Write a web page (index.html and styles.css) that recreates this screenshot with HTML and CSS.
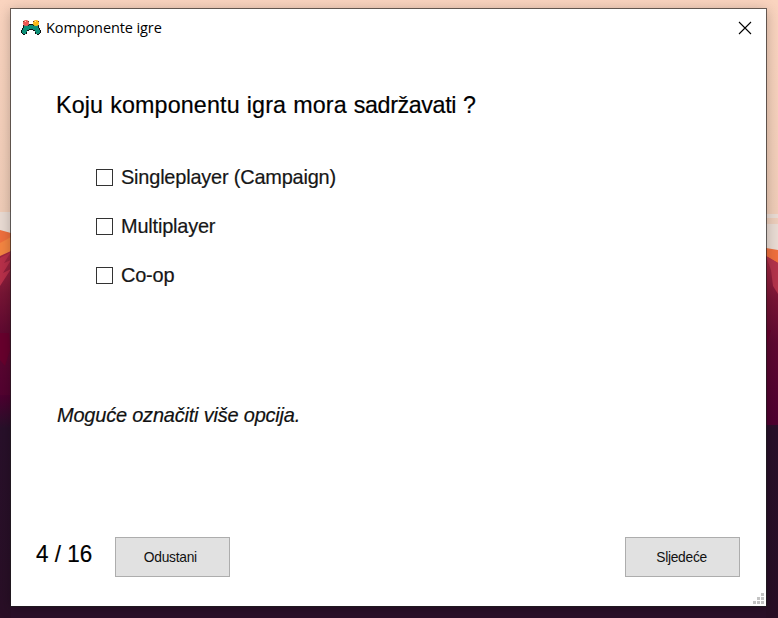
FILE: index.html
```html
<!DOCTYPE html>
<html lang="hr">
<head>
<meta charset="utf-8">
<title>Komponente igre</title>
<link rel="stylesheet" href="styles.css">
</head>
<body>
<svg class="wallpaper" viewBox="0 0 778 618" aria-hidden="true">
  <defs>
    <linearGradient id="sky" x1="0" y1="0" x2="0" y2="1">
      <stop offset="0" stop-color="#fad4bf"/><stop offset=".85" stop-color="#f0cdb8"/><stop offset="1" stop-color="#e5d1c6"/>
    </linearGradient>
    <linearGradient id="hill" x1="0" y1="0" x2="0" y2="1">
      <stop offset="0" stop-color="#a72943"/><stop offset=".25" stop-color="#781535"/><stop offset=".5" stop-color="#5e0830"/><stop offset="1" stop-color="#4e0030"/>
    </linearGradient>
    <linearGradient id="base" x1="0" y1="0" x2="0" y2="1">
      <stop offset="0" stop-color="#4e0030"/><stop offset=".15" stop-color="#28102a"/><stop offset="1" stop-color="#290f26"/>
    </linearGradient>
  </defs>
  <rect width="778" height="618" fill="#2b1029"/>
  <rect width="778" height="250" fill="url(#sky)"/>
  <path d="M0 212H11V234H0zM766 214H778V218H766zM766 224H778V250H766z" fill="#eadcd4"/>
  <path d="M0 230L11 233V290H0zM766 248L778 250V300H766z" fill="#f0703e"/>
  <path d="M0 243L11 237V254L0 258z" fill="#f58642"/>
  <path d="M0 256L11 251V420H0z" fill="url(#hill)"/>
  <path d="M0 258L11 252 4 263 11 260 3 273 11 269 0 286z" fill="#b9304a"/>
  <path d="M766 256L778 263V430H766z" fill="url(#hill)"/>
  <path d="M766 256L778 263V294L773 286 771 270z" fill="#b3344b"/>
  <path d="M0 333L9 333 10 350 5 366 0 360zM766 330H771L767 345z" fill="#68002d"/>
  <path d="M0 395H11V618H0zM766 425H778V618H766z" fill="url(#base)"/>
</svg>
<main class="window">
  <header class="titlebar">
    <svg class="app-icon" viewBox="0 0 20 16" aria-hidden="true">
      <path d="M3 4H17V6H18V9H19V13H18V14H15V12H14V10H12V9H8V10H6V12H5V14H2V13H1V9H2V6H3z" fill="#0d9078"/>
      <path d="M2 5H3V8H2zM1 8H2V10H1zM0 10H1V13H0zM1 13H2V14H1zM2 14H4V15H2zM5 12H6V14H5zM6 10H8V11H6zM8 9H12V10H8zM12 10H14V11H12zM14 12H15V14H14zM16 14H18V15H16zM18 13H19V14H18zM19 10H20V13H19zM18 8H19V10H18zM17 5H18V8H17zM8 4H12V5H8zM7 5H8V6H7zM12 5H13V6H12z" fill="#101010"/>
      <circle cx="5" cy="3" r="3" fill="#ee5652"/><circle cx="15" cy="3" r="3" fill="#fbb917"/>
      <path d="M4 1H5V2H4zM14 1H15V2H14z" fill="#ffd9a8"/>
      <path d="M7 1H8V2H7zM12 1H13V2H12zM2 1H3V2H2zM17 1H18V2H17z" fill="#6b3821"/>
    </svg>
    <span class="title">Komponente igre</span>
    <svg class="close" viewBox="0 0 12 12" aria-hidden="true"><path d="M0 0L12 12M12 0L0 12"/></svg>
  </header>
  <section class="content">
    <h1><span class="fit t-heading">Koju komponentu igra mora <span class="tight">sadržavati</span> ?</span></h1>
    <div class="options">
      <label class="option"><i class="box"></i><span class="fit t-option">Singleplayer (Campaign)</span></label>
      <label class="option"><i class="box"></i><span class="fit t-option">Multiplayer</span></label>
      <label class="option"><i class="box"></i><span class="fit t-option">Co-op</span></label>
    </div>
    <p class="note"><span class="fit t-note">Moguće označiti više opcija.</span></p>
  </section>
  <footer class="footer">
    <span class="progress"><span class="fit t-progress">4 / 16</span></span>
    <button class="btn cancel"><span class="t-btn">Odustani</span></button>
    <button class="btn next"><span class="t-btn">Sljedeće</span></button>
  </footer>
  <svg class="grip" viewBox="0 0 11 11" aria-hidden="true"><path d="M8 0h3v3H8zM4 4h3v3H4zM8 4h3v3H8zM0 8h3v3H0zM4 8h3v3H4zM8 8h3v3H8z"/></svg>
</main>
</body>
</html>
```
FILE: styles.css
```css
* { box-sizing: border-box; }
body {
  margin: 0;
  width: 778px;
  height: 618px;
  overflow: hidden;
  position: relative;
  padding: 8px 0 0 10px;
  font-family: "Liberation Sans", Arial, sans-serif;
  color: #000;
}
.wallpaper { position: absolute; inset: 0; width: 778px; height: 618px; }
.window {
  position: relative;
  display: flex;
  flex-direction: column;
  width: 757px;
  height: 599px;
  background: #fff;
  border: 1px solid rgba(30, 30, 30, .65);
  background-clip: padding-box;
  box-shadow: 0 2px 12px rgba(0, 0, 0, .24);
}
.titlebar {
  display: flex;
  align-items: center;
  height: 38px;
  padding: 0 15px 0 10px;
}
.app-icon { width: 20px; height: 16px; margin-right: 5px; }
.title { font: 14.5px/20px "Open Sans", "Noto Sans", sans-serif; letter-spacing: -.1px; white-space: nowrap; }
.close { width: 12px; height: 12px; margin-left: auto; overflow: visible; }
.close path { stroke: #000; stroke-width: 1.1; fill: none; }
.content { padding: 44px 45px 0; height: 470px; }
.fit { display: inline-block; transform-origin: 0 50%; -webkit-text-stroke: .2px currentColor; }
h1 { margin: 0; font-size: 24px; line-height: 28px; font-weight: 400; white-space: nowrap; }
.options { display: grid; gap: 21px; padding: 44px 0 0 40px; }
.option { display: flex; align-items: center; height: 28px; font-size: 21px; line-height: 28px; white-space: nowrap; color: #161616; }
.box { width: 17px; height: 17px; margin-right: 8px; border: 1px solid #333; background: #fff; }
.note { margin: 112px 0 0; font-size: 21px; line-height: 28px; font-style: italic; white-space: nowrap; color: #111; }
.t-heading { letter-spacing: .15px; word-spacing: .4px; transform: scaleX(.97); }
.tight { letter-spacing: -.4px; }
.t-option { letter-spacing: -.2px; transform: scaleX(.949); }
.t-note { letter-spacing: -.2px; transform: translateX(1px) scaleX(.95); }
.footer { display: flex; align-items: flex-start; padding: 20px 26px 0 25px; }
.progress { width: 79px; font-size: 24px; line-height: 34px; white-space: nowrap; }
.t-progress { transform: scaleX(.935); }
.btn {
  width: 115px;
  height: 40px;
  padding: 0;
  border: 1px solid #adadad;
  background: #e1e1e1;
  font: 15px/18px "Liberation Sans", Arial, sans-serif;
  color: #111;
}
.t-btn { display: inline-block; letter-spacing: -.3px; transform: translateX(-2.5px) scaleX(.92); }
.next { margin-left: auto; }
.next .t-btn { transform: translateX(-1px) scaleX(.92); }
.grip { position: absolute; right: 2px; bottom: 2px; width: 11px; height: 11px; fill: #c3c3c3; }
```
